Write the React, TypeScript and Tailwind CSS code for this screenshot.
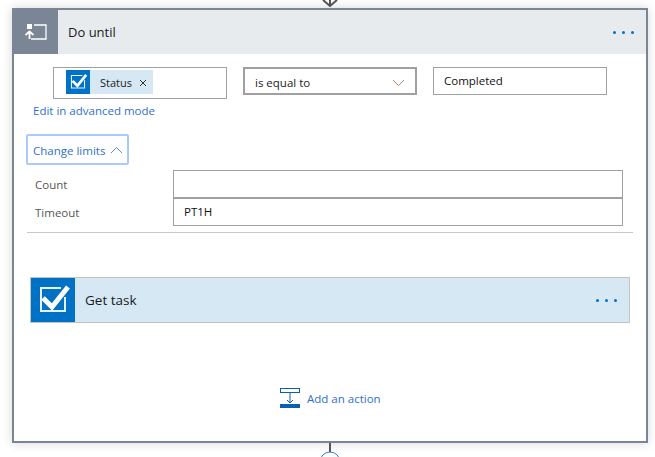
const font = { fontFamily: '"Open Sans", "Noto Sans", sans-serif' };

function CheckIcon({ size }: { size: number }) {
  return (
    <svg width={size} height={size} viewBox="0 0 44 44" fill="none">
      <path d="M34 19v14H10V10h20" stroke="#fff" strokeWidth="2" opacity="0.9" />
      <path d="M12 20l9 9L37 9" stroke="#fff" strokeWidth="5" />
    </svg>
  );
}

function Dots() {
  return (
    <div className="flex gap-[6px]">
      <span className="w-[3px] h-[3px] rounded-full bg-[#0072c6]" />
      <span className="w-[3px] h-[3px] rounded-full bg-[#0072c6]" />
      <span className="w-[3px] h-[3px] rounded-full bg-[#0072c6]" />
    </div>
  );
}

export default function App() {
  return (
    <div className="w-[655px] h-[457px] overflow-hidden bg-white flex flex-col" style={font}>
      {/* connector coming in from above */}
      <div className="h-[8px] flex justify-center shrink-0">
        <svg width="16" height="8" viewBox="0 0 16 8" fill="none" className="ml-[5px]">
          <path d="M1 0l7 6 7-6" stroke="#555" strokeWidth="2" />
          <path d="M8 0v6" stroke="#555" strokeWidth="2" />
        </svg>
      </div>

      <div className="ml-3 w-[636px] h-[435px] shrink-0 bg-white border-2 border-[#7a8696] shadow-[0_0_10px_rgba(0,0,0,0.16)] flex flex-col">
        {/* header */}
        <div className="h-[44px] shrink-0 bg-[#e8ebee] flex items-center pr-[12px]">
          <div className="w-[44px] h-[44px] bg-[#7a8696] flex items-center justify-center">
            <svg width="22" height="16" viewBox="0 0 22 16" fill="none">
              <rect x="2" y="0" width="5" height="5" fill="#fff" />
              <path d="M9 1h12v14H6" stroke="#fff" strokeWidth="1.3" />
              <path d="M0.500 11l4-3.500 4 3.500M4.500 8v7" stroke="#fff" strokeWidth="1.8" />
            </svg>
          </div>
          <span className="ml-[10px] pt-[2px] flex-1 text-[13px] text-[#1a1a1a]">Do until</span>
          <Dots />
        </div>

        {/* condition row */}
        <div className="mt-[13px] ml-[39px] flex items-start">
          <div className="w-[174px] h-[32px] border border-[#a0a0a0] pl-[12px] pt-[2px]">
            <div className="w-[87px] h-[24px] bg-[#d6e8f4] flex items-center">
              <div className="w-[24px] h-[24px] bg-[#0072c6]">
                <CheckIcon size={24} />
              </div>
              <span className="ml-[10px] pt-[2px] text-[11px] text-[#222]">Status</span>
              <svg width="8" height="8" viewBox="0 0 8 8" className="ml-[7px] mt-[2px]" fill="none">
                <path d="M1 1l6 6M7 1L1 7" stroke="#333" strokeWidth="1" />
              </svg>
            </div>
          </div>
          <div className="ml-[16px] w-[174px] h-[28px] border-2 border-[#a0a0a0] flex items-center pl-[10px] pr-[10px]">
            <span className="flex-1 pt-[3px] text-[11.500px] text-[#222]">is equal to</span>
            <svg width="13" height="8" viewBox="0 0 13 8" fill="none" className="mt-[3px]">
              <path d="M1 1l5.500 5.500L12 1" stroke="#b08a70" strokeWidth="1" />
            </svg>
          </div>
          <div className="ml-[16px] w-[174px] h-[28px] border border-[#a0a0a0] flex items-center pl-[10px]">
            <span className="text-[11.500px] text-[#111]">Completed</span>
          </div>
        </div>

        <div className="ml-[19px] mt-[4px] text-[11.500px] leading-[16px] text-[#2f6fd0]">Edit in advanced mode</div>

        {/* limits */}
        <div className="ml-[12px] mt-[15px] w-[103px] h-[31px] rounded-[2px] border-2 border-[#a9c9ff] flex items-center pl-[5px] gap-[5px]">
          <span className="pt-[2px] text-[11.500px] text-[#2f6fd0]">Change limits</span>
          <svg width="13" height="8" viewBox="0 0 13 8" fill="none">
            <path d="M1 7l5.500-5.500L12 7" stroke="#5a8fd8" strokeWidth="1" />
          </svg>
        </div>

        <div className="ml-[21px] mt-[5px] flex items-center h-[28px]">
          <span className="w-[138px] pt-[2px] text-[11.500px] text-[#555]">Count</span>
          <div className="w-[450px] h-[28px] border border-[#a0a0a0]" />
        </div>
        <div className="ml-[21px] flex items-center h-[28px]">
          <span className="w-[138px] pt-[2px] text-[11.500px] text-[#555]">Timeout</span>
          <div className="w-[450px] h-[28px] border border-[#a0a0a0] pl-[10px] flex items-center text-[11.500px] text-[#111]">PT1H</div>
        </div>

        <div className="ml-[13px] mt-[6px] w-[606px] border-t border-[#c8c8c8]" />

        {/* nested action */}
        <div className="ml-[16px] mt-[44px] w-[600px] h-[46px] border border-[#c3c3c3] bg-[#d6e8f4] flex items-center pr-[12px]">
          <div className="w-[44px] h-[44px] bg-[#0072c6]">
            <CheckIcon size={44} />
          </div>
          <span className="ml-[10px] flex-1 text-[13.500px] text-[#1a1a1a]">Get task</span>
          <Dots />
        </div>

        <div className="ml-[266px] mt-[65px] flex items-center">
          <svg width="20" height="20" viewBox="0 0 20 20" fill="none">
            <rect x="0.500" y="0.500" width="19" height="4" stroke="#0a5fb0" fill="none" />
            <path d="M10 5v10M7 12l3 3 3-3" stroke="#0a5fb0" strokeWidth="1" />
            <rect x="0" y="16" width="20" height="4" fill="#0a5fb0" />
          </svg>
          <span className="ml-[7px] pt-[2px] text-[11.500px] text-[#2f6fd0]">Add an action</span>
        </div>
      </div>

      {/* connector going out below */}
      <div className="flex-1 flex justify-center">
        <svg width="22" height="14" viewBox="0 0 22 14" fill="none" className="ml-[5px]">
          <path d="M11 0v9" stroke="#555" strokeWidth="2" />
          <circle cx="11" cy="19" r="10" stroke="#2f7fd0" strokeWidth="1" fill="#fff" />
        </svg>
      </div>
    </div>
  );
}
